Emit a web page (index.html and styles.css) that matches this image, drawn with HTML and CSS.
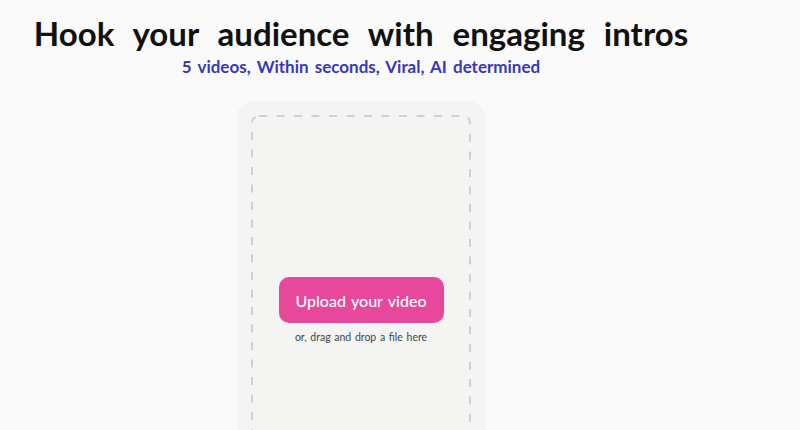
FILE: index.html
```html
<!DOCTYPE html>
<html>
<head>
<meta charset="utf-8">
<link rel="stylesheet" href="styles.css">
</head>
<body>
<main class="page">
  <h1 class="title">Hook your audience with engaging intros</h1>
  <p class="subtitle">5 videos, Within seconds, Viral, AI determined</p>
  <section class="card">
    <div class="dropzone">
      <button class="upload">Upload your video</button>
      <p class="hint">or, drag and drop a file here</p>
    </div>
  </section>
</main>
</body>
</html>
```
FILE: styles.css
```css
html, body {
  margin: 0;
  padding: 0;
  background: #fafafa;
  overflow: hidden;
}
.page {
  width: 722px;
  display: flex;
  flex-direction: column;
  align-items: center;
  font-family: Lato, "Noto Sans", sans-serif;
}
.title {
  margin: 13px 0 0;
  font-size: 33px;
  font-weight: 700;
  color: #111;
  word-spacing: 11px;
  line-height: 40px;
}
.subtitle {
  margin: 3px 0 0;
  font-size: 17px;
  font-weight: 700;
  color: #3838b8;
  word-spacing: 2px;
  line-height: 22px;
}
.card {
  margin-top: 23px;
  width: 248px;
  height: 416px;
  flex-shrink: 0;
  box-sizing: border-box;
  padding: 14px 14px 14px 14px;
  background: #f4f4f3;
  border-radius: 16px;
}
.dropzone {
  height: 100%;
  box-sizing: border-box;
  border-radius: 8px;
  background-image: url("data:image/svg+xml,%3csvg width='100%25' height='100%25' xmlns='http://www.w3.org/2000/svg'%3e%3crect width='100%25' height='100%25' fill='none' rx='8' ry='8' stroke='%23D0D0D0' stroke-width='4' stroke-dasharray='8%2c 9.5' stroke-dashoffset='0' stroke-linecap='butt'/%3e%3c/svg%3e");
  display: flex;
  flex-direction: column;
  align-items: center;
  justify-content: center;
}
.upload {
  width: 165px;
  height: 46px;
  border: none;
  border-radius: 10px;
  background: #e8489b;
  color: #fff;
  font-family: inherit;
  font-size: 16px;
  font-weight: 500;
  word-spacing: 1.5px;
  margin-top: 2px;
}
.hint {
  margin: 8px 0 0;
  font-size: 10.5px;
  color: #444;
  word-spacing: 1px;
}
```
